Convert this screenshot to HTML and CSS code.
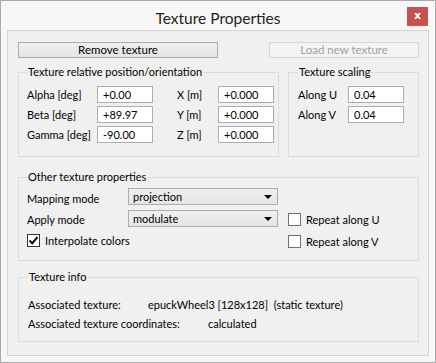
FILE: index.html
```html
<!DOCTYPE html>
<html>
<head>
<meta charset="utf-8">
<link rel="stylesheet" href="styles.css">
</head>
<body>
<div class="window">
  <div class="titlebar">
    <span class="title">Texture Properties</span>
    <span class="close">x</span>
  </div>
  <div class="client">
    <div class="btnrow">
      <button class="btn remove">Remove texture</button>
      <button class="btn load" disabled>Load new texture</button>
    </div>
    <div class="toprow">
      <fieldset class="group pos">
        <legend>Texture relative position/orientation</legend>
        <div class="posgrid">
          <span class="lbl">Alpha [deg]</span><span class="field">+0.00</span>
          <span class="lbl">X [m]</span><span class="field">+0.000</span>
          <span class="lbl">Beta [deg]</span><span class="field">+89.97</span>
          <span class="lbl">Y [m]</span><span class="field">+0.000</span>
          <span class="lbl">Gamma [deg]</span><span class="field">-90.00</span>
          <span class="lbl">Z [m]</span><span class="field">+0.000</span>
        </div>
      </fieldset>
      <fieldset class="group scale">
        <legend>Texture scaling</legend>
        <div class="scalegrid">
          <span class="lbl">Along U</span><span class="field">0.04</span>
          <span class="lbl">Along V</span><span class="field">0.04</span>
        </div>
      </fieldset>
    </div>
    <fieldset class="group other">
      <legend>Other texture properties</legend>
      <div class="othergrid">
        <span class="lbl l1">Mapping mode</span>
        <span class="combo c1">projection<span class="arrow"></span></span>
        <span class="lbl l2">Apply mode</span>
        <span class="combo c2">modulate<span class="arrow"></span></span>
        <span class="check k1"><span class="box checked"><svg width="11" height="11" viewBox="0 0 11 11"><path d="M1.5 5.5 L4.2 8.3 L9.5 2.2" fill="none" stroke="#000" stroke-width="2"/></svg></span>Interpolate colors</span>
        <span class="check k2"><span class="box"></span>Repeat along U</span>
        <span class="check k3"><span class="box"></span>Repeat along V</span>
      </div>
    </fieldset>
    <fieldset class="group info">
      <legend>Texture info</legend>
      <div class="inforow"><span class="ilbl a">Associated texture:</span><span>epuckWheel3 [128x128]&nbsp; (static texture)</span></div>
      <div class="inforow"><span class="ilbl b">Associated texture coordinates:</span><span>calculated</span></div>
    </fieldset>
  </div>
</div>
</body>
</html>
```
FILE: styles.css
```css
* { box-sizing: border-box; }
html, body { margin: 0; padding: 0; }
body {
  font-family: Lato, "Noto Sans", sans-serif;
  font-size: 11px;
  color: #000;
  background: #f7f7f7;
}
.window {
  width: 436px;
  height: 363px;
  border: 1px solid #a9a9a9;
  background: #f7f7f7;
  display: flex;
  flex-direction: column;
}
.titlebar {
  height: 29px;
  display: flex;
  align-items: center;
  justify-content: center;
  position: relative;
}
.title {
  font-size: 15.5px;
  color: #222;
  margin-top: 4px;
}
.close {
  position: absolute;
  right: 7px;
  top: 6px;
  width: 21px;
  height: 19px;
  background: #c75050;
  color: #fff;
  font-family: "DejaVu Sans", sans-serif;
  font-weight: bold;
  font-size: 11px;
  line-height: 17px;
  text-align: center;
}
.client {
  margin: 0 6px;
  height: 326px;
  border: 1px solid #d4d4d4;
  background: #f0f0f0;
  padding: 11px 9px 0 10px;
}
.btnrow {
  display: flex;
  justify-content: space-between;
  height: 16px;
}
.btn {
  font: inherit;
  font-size: 11.5px;
  height: 16px;
  padding: 0;
  line-height: 14px;
  border: 1px solid #acacac;
  background: linear-gradient(#f0f0f0, #e5e5e5);
  color: #000;
}
.remove { width: 200px; }
.load {
  width: 150px;
  border-color: #d5d5d5;
  background: #f4f4f4;
  color: #a0a0a0;
}
.group {
  margin: 0;
  border: 1px solid #dcdcdc;
  padding: 0 0 0 8px;
  min-width: 0;
}
.group legend {
  padding: 0 1px;
  line-height: 14px;
}
.toprow {
  display: flex;
  gap: 9px;
  margin-top: 7px;
}
.pos { width: 261px; height: 92px; padding-top: 7px; }
.scale { width: 131px; height: 92px; padding-top: 7px; padding-left: 9px; }
.posgrid {
  display: grid;
  grid-template-columns: 70px 56px 24px 41px 56px;
  grid-template-rows: repeat(3, 17px);
  row-gap: 3px;
}
.posgrid .lbl:nth-child(4n+3) { grid-column: 4; }
.scalegrid {
  display: grid;
  grid-template-columns: 50px 56px;
  grid-template-rows: repeat(2, 17px);
  row-gap: 3px;
}
.lbl {
  line-height: 17px;
  white-space: nowrap;
}
.field {
  height: 17px;
  border: 1px solid #abadb3;
  background: #fff;
  padding-left: 5px;
  line-height: 15px;
}
.other {
  margin-top: 13px;
  height: 91px;
  padding-top: 4px;
}
.othergrid {
  display: grid;
  grid-template-columns: 101px 150px 10px auto;
  grid-template-rows: 17px 5px 17px 5px 14px;
}
.l1 { grid-row: 1; grid-column: 1; line-height: 22px; }
.c1 { grid-row: 1; grid-column: 2; }
.l2 { grid-row: 3; grid-column: 1; line-height: 20px; }
.c2 { grid-row: 3; grid-column: 2; }
.k1 { grid-row: 5; grid-column: 1 / 3; margin-top: 2px; }
.k2 { grid-row: 3; grid-column: 4; margin-top: 3px; }
.k3 { grid-row: 5; grid-column: 4; margin-top: 3px; }
.combo {
  height: 17px;
  border: 1px solid #acacac;
  background: linear-gradient(#f0f0f0, #e5e5e5);
  padding-left: 4px;
  line-height: 15px;
  display: flex;
  justify-content: space-between;
  align-items: center;
}
.arrow {
  width: 0;
  height: 0;
  border-left: 4px solid transparent;
  border-right: 4px solid transparent;
  border-top: 4px solid #000;
  margin-right: 5px;
}
.check {
  display: flex;
  align-items: center;
  height: 13px;
  white-space: nowrap;
}
.box {
  width: 13px;
  height: 13px;
  border: 1px solid #707070;
  background: #fff;
  margin-right: 5px;
  flex: none;
  display: flex;
  align-items: center;
  justify-content: center;
}
.box.checked { border-color: #333; }
.info {
  margin-top: 9px;
  height: 72px;
  padding-top: 11px;
  padding-left: 9px;
}
.inforow {
  display: flex;
  height: 19px;
  line-height: 19px;
}
.ilbl.a { width: 120px; }
.ilbl.b { width: 180px; }
```
